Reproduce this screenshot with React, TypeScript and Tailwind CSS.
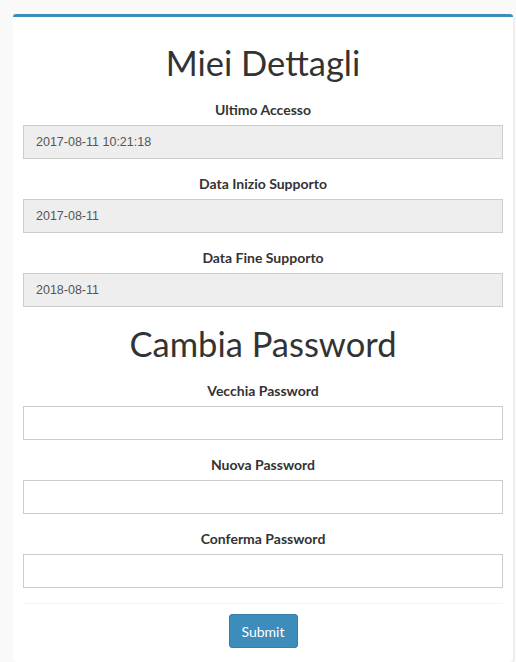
import React from "react";

interface Field {
  label: string;
  value?: string;
  disabled?: boolean;
}

const dettagli: Field[] = [
  { label: "Ultimo Accesso", value: "2017-08-11 10:21:18", disabled: true },
  { label: "Data Inizio Supporto", value: "2017-08-11", disabled: true },
  { label: "Data Fine Supporto", value: "2018-08-11", disabled: true },
];

const password: Field[] = [
  { label: "Vecchia Password" },
  { label: "Nuova Password" },
  { label: "Conferma Password" },
];

function FormGroup({ field, last }: { field: Field; last?: boolean }) {
  return (
    <div className={last ? "" : "mb-[15px]"}>
      <label className="block text-center text-[14px] leading-[20px] font-bold text-[#333] mb-[5px]">
        {field.label}
      </label>
      <input
        type={field.disabled ? "text" : "password"}
        disabled={field.disabled}
        defaultValue={field.value}
        className={`block w-full h-[34px] px-[12px] border border-[#ccc] text-[12.5px] text-[#555] font-['Liberation_Sans',Arial,sans-serif] outline-none ${
          field.disabled ? "bg-[#eee]" : "bg-white"
        }`}
      />
    </div>
  );
}

export default function App() {
  return (
    <div className="min-h-[662px] bg-[#f9f9f9] pl-[13px] pr-[3px] pt-[14px] font-['Lato',sans-serif]">
      <div className="bg-white border-t-[3px] border-[#3c8dbc] rounded-[3px] shadow-[1px_1px_2px_rgba(0,0,0,0.08)] px-[10px] pb-[14px]">
        {/* Miei Dettagli */}
        <h1 className="mt-[26px] mb-[17px] text-center text-[34.5px] leading-[40px] text-[#333]">
          Miei Dettagli
        </h1>
        {dettagli.map((f, i) => (
          <FormGroup key={f.label} field={f} last={i === dettagli.length - 1} />
        ))}

        {/* Cambia Password */}
        <h1 className="mt-[17px] mb-[17px] text-center text-[34.5px] leading-[40px] text-[#333]">
          Cambia Password
        </h1>
        {password.map((f) => (
          <FormGroup key={f.label} field={f} />
        ))}

        <div className="border-t border-[#f4f4f4] pt-[10px] flex justify-center">
          <button className="h-[34px] w-[69px] rounded-[3px] bg-[#3c8dbc] border border-[#367fa9] text-white text-[14px]">
            Submit
          </button>
        </div>
      </div>
    </div>
  );
}
